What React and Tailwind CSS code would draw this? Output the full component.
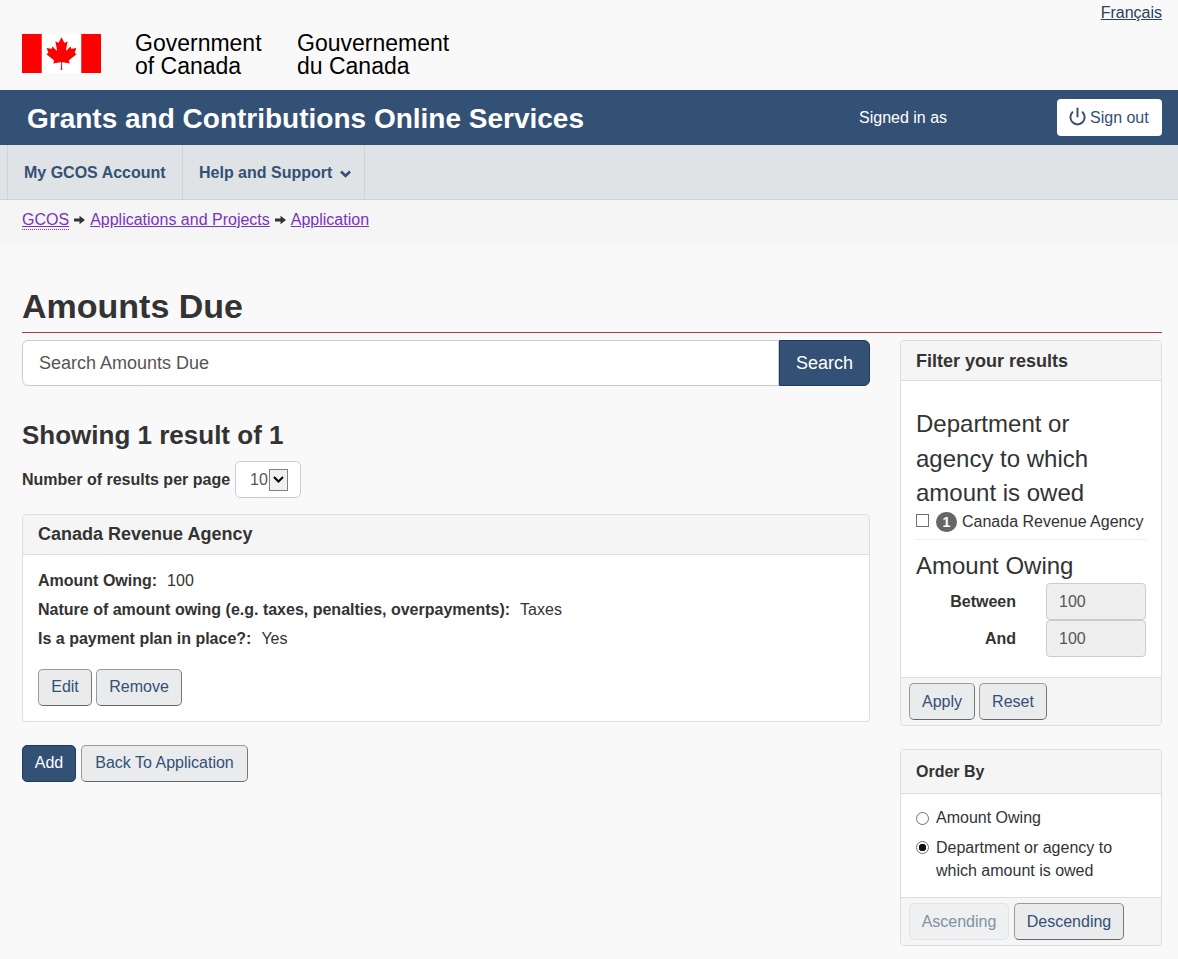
import React from "react";
import { Power } from "lucide-react";

const btnBase = "inline-flex items-center justify-center h-[37px] rounded-[5px] border border-[#9a9a9a] border-r-[#777] border-b-[#666] bg-[#eaebed] text-[#335075] text-[16px]";
const btn = `${btnBase} pb-[2px]`;

function Flag() {
  return (
    <svg width="79" height="39" viewBox="0 0 9600 4800" preserveAspectRatio="none" className="block">
      <path fill="#f00" d="m0 0h2400l99 99h4602l99-99h2400v4800h-2400l-99-99h-4602l-99 99h-2400z" />
      <path fill="#fff" d="m2400 0h4800v4800h-4800zm2490 4430-45-863a95 95 0 0 1 111-98l859 151-116-320a65 65 0 0 1 20-73l941-762-212-99a65 65 0 0 1-34-79l186-572-542 115a65 65 0 0 1-73-38l-105-247-423 454a65 65 0 0 1-111-57l204-1052-327 189a65 65 0 0 1-91-27l-332-652-332 652a65 65 0 0 1-91 27l-327-189 204 1052a65 65 0 0 1-111 57l-423-454-105 247a65 65 0 0 1-73 38l-542-115 186 572a65 65 0 0 1-34 79l-212 99 941 762a65 65 0 0 1 20 73l-116 320 859-151a95 95 0 0 1 111 98l-45 863z" />
    </svg>
  );
}

function Arrow() {
  return (
    <svg width="11" height="10" viewBox="0 0 11 10" className="mx-[5px] shrink-0">
      <path d="M0 3.6h5.5V0.8L11 5 5.5 9.2V6.4H0z" fill="#333" />
    </svg>
  );
}

function Row({ label, value }) {
  return (
    <div className="h-[29px] flex items-center">
      <span className="font-bold">{label}</span>
      <span className="ml-[10px]">{value}</span>
    </div>
  );
}

export default function App() {
  return (
    <div className="min-h-[959px] bg-[#f9f9f9] text-[16px] text-[#333] font-['Liberation_Sans',Arial,sans-serif] overflow-hidden">
      <header className="h-[90px] relative">
        <a href="#" className="absolute right-[16px] top-[4px] leading-[18px] text-[#284162] underline">Français</a>
        <div className="flex items-start pl-[22px] pt-[31px]">
          <div className="mt-[3px]"><Flag /></div>
          <div className="ml-[34px] mt-[1px] w-[162px] text-[23px] leading-[23px] text-black">Government<br />of Canada</div>
          <div className="mt-[1px] text-[23px] leading-[23px] text-black">Gouvernement<br />du Canada</div>
        </div>
      </header>

      <div className="h-[55px] bg-[#335075] flex items-center text-white pl-[27px] pr-[16px]">
        <div className="text-[28px] font-bold w-[832px] pt-[2px]">Grants and Contributions Online Services</div>
        <div className="w-[198px]">Signed in as</div>
        <a href="#" className="h-[37px] w-[105px] rounded-[4px] bg-white text-[#335075] flex items-center pl-[11px]">
          <Power size={19} strokeWidth={2.5} className="mr-[3px] mb-[3px]" />Sign out
        </a>
      </div>

      <nav className="h-[55px] bg-[#dfe3e6] border-b border-[#ced3d7] flex pl-[7px] font-bold text-[#335075]">
        <a href="#" className="border-l border-[#ced3d7] pl-[16px] pt-[2px] w-[175px] flex items-center">My GCOS Account</a>
        <a href="#" className="border-x border-[#ced3d7] pl-[16px] pt-[2px] w-[183px] flex items-center">
          Help and Support
          <svg width="11" height="8" viewBox="0 0 11 8" className="ml-[8px] mt-[2px]"><path d="M1 1.5l4.5 4.5L10 1.5" fill="none" stroke="#335075" strokeWidth="2.6" /></svg>
        </a>
      </nav>

      <div className="h-[45px] bg-[#f5f5f5] flex items-center pl-[22px] pb-[6px] text-[#7834bc]">
        <a href="#" className="underline border-b border-dotted border-[#7834bc] leading-[19px]">GCOS</a>
        <Arrow />
        <a href="#" className="underline">Applications and Projects</a>
        <Arrow />
        <a href="#" className="underline">Application</a>
      </div>

      <main className="pl-[22px] pr-[16px]">
        <h1 className="mt-[38px] h-[49px] text-[34px] leading-[46px] font-bold">Amounts Due</h1>
        <div className="h-px bg-[#af3c43]"></div>

        <div className="mt-[7px] flex justify-between items-start">
          <section className="w-[848px]">
            <div className="flex h-[46px] text-[18px]">
              <input readOnly defaultValue="Search Amounts Due" className="flex-1 min-w-0 bg-white border border-[#ccc] rounded-l-[6px] px-[16px] text-[#555] outline-none" />
              <button className="w-[91px] bg-[#335075] border border-[#1f3a5a] rounded-r-[6px] text-white">Search</button>
            </div>

            <h2 className="mt-[33px] text-[26px] leading-[33px] font-bold">Showing 1 result of 1</h2>

            <div className="mt-[9px] flex items-center h-[37px]">
              <label className="font-bold">Number of results per page</label>
              <div className="ml-[5px] w-[66px] h-[37px] bg-white border border-[#ccc] rounded-[5px] flex items-center pl-[14px] text-[#555]">
                <span>10</span>
                <span className="ml-[1px] w-[19px] h-[22px] border border-[#808080] bg-[#f0f0f0] flex items-center justify-center">
                  <svg width="11" height="7" viewBox="0 0 11 7"><path d="M1 1l4.5 4.5L10 1" fill="none" stroke="#000" strokeWidth="2" /></svg>
                </span>
              </div>
            </div>

            <div className="mt-[16px] bg-white border border-[#ddd] rounded-[4px] h-[208px]">
              <div className="h-[40px] bg-[#f5f5f5] border-b border-[#ddd] rounded-t-[4px] px-[15px] flex items-center text-[18px] font-bold">Canada Revenue Agency</div>
              <div className="px-[15px] pt-[11px]">
                <Row label="Amount Owing:" value="100" />
                <Row label="Nature of amount owing (e.g. taxes, penalties, overpayments):" value="Taxes" />
                <Row label="Is a payment plan in place?:" value="Yes" />
                <div className="mt-[16px] flex gap-[4px]">
                  <button className={`${btn} w-[54px]`}>Edit</button>
                  <button className={`${btn} w-[86px]`}>Remove</button>
                </div>
              </div>
            </div>

            <div className="mt-[23px] flex gap-[5px]">
              <button className="h-[37px] w-[54px] pb-[2px] rounded-[5px] border border-[#1f3a5a] bg-[#335075] text-white">Add</button>
              <button className={`${btn} w-[167px]`}>Back To Application</button>
            </div>
          </section>

          <aside className="w-[262px]">
            <div className="bg-white border border-[#ddd] rounded-[4px] h-[386px] flex flex-col">
              <div className="h-[40px] shrink-0 bg-[#f5f5f5] border-b border-[#ddd] rounded-t-[4px] px-[15px] pt-[2px] flex items-center text-[18px] font-bold">Filter your results</div>
              <div className="flex-1 px-[15px] pt-[26px]">
                <h3 className="text-[24px] leading-[34.5px]">Department or agency to which amount is owed</h3>
                <div className="h-[29px] pb-[7px] border-b border-[#eee] flex items-center">
                  <input type="checkbox" className="appearance-none mb-[1px] w-[13px] h-[13px] border border-[#707070] bg-white" />
                  <span className="ml-[7px] mt-[2px] w-[21px] h-[20px] rounded-full bg-[#666] text-white text-[14px] font-bold flex items-center justify-center">1</span>
                  <span className="ml-[5px] mt-[2px]">Canada Revenue Agency</span>
                </div>
                <h3 className="mt-[9px] text-[24px] leading-[34px]">Amount Owing</h3>
                <div className="flex items-center">
                  <label className="w-[100px] pt-[1px] text-right font-bold">Between</label>
                  <input readOnly defaultValue="100" className="ml-[30px] w-[100px] h-[37px] bg-[#eee] border border-[#ccc] rounded-[4px] px-[12px] pt-[2px] text-[#555] outline-none" />
                </div>
                <div className="flex items-center">
                  <label className="w-[100px] pt-[1px] text-right font-bold">And</label>
                  <input readOnly defaultValue="100" className="ml-[30px] w-[100px] h-[37px] bg-[#eee] border border-[#ccc] rounded-[4px] px-[12px] pt-[2px] text-[#555] outline-none" />
                </div>
              </div>
              <div className="h-[48px] shrink-0 bg-[#f5f5f5] border-t border-[#ddd] rounded-b-[4px] pl-[8px] pt-[5px] flex gap-[4px]">
                <button className={`${btnBase} w-[66px]`}>Apply</button>
                <button className={`${btnBase} w-[68px]`}>Reset</button>
              </div>
            </div>

            <div className="mt-[23px] bg-white border border-[#ddd] rounded-[4px] h-[197px] flex flex-col">
              <div className="h-[44px] shrink-0 bg-[#f5f5f5] border-b border-[#ddd] rounded-t-[4px] px-[15px] flex items-center font-bold">Order By</div>
              <div className="flex-1 px-[15px] pt-[12px]">
                <label className="flex items-center h-[24px]">
                  <input type="radio" name="order" className="appearance-none w-[13px] h-[13px] rounded-full border border-[#707070] bg-white" />
                  <span className="ml-[7px]">Amount Owing</span>
                </label>
                <label className="mt-[6px] flex items-start leading-[23px]">
                  <input type="radio" name="order" defaultChecked className="appearance-none mt-[5px] w-[13px] h-[13px] shrink-0 rounded-full border border-[#707070] bg-[radial-gradient(circle,#111_3.5px,#fff_4px)]" />
                  <span className="ml-[7px]">Department or agency to which amount is owed</span>
                </label>
              </div>
              <div className="h-[48px] shrink-0 bg-[#f5f5f5] border-t border-[#ddd] rounded-b-[4px] pl-[8px] pt-[5px] flex gap-[5px]">
                <button disabled className="h-[37px] w-[100px] rounded-[5px] border border-[#e2e3e5] bg-[#eef0f1] text-[#8291a6]">Ascending</button>
                <button className={`${btnBase} w-[110px] text-[#284162]`}>Descending</button>
              </div>
            </div>
          </aside>
        </div>
      </main>
    </div>
  );
}
